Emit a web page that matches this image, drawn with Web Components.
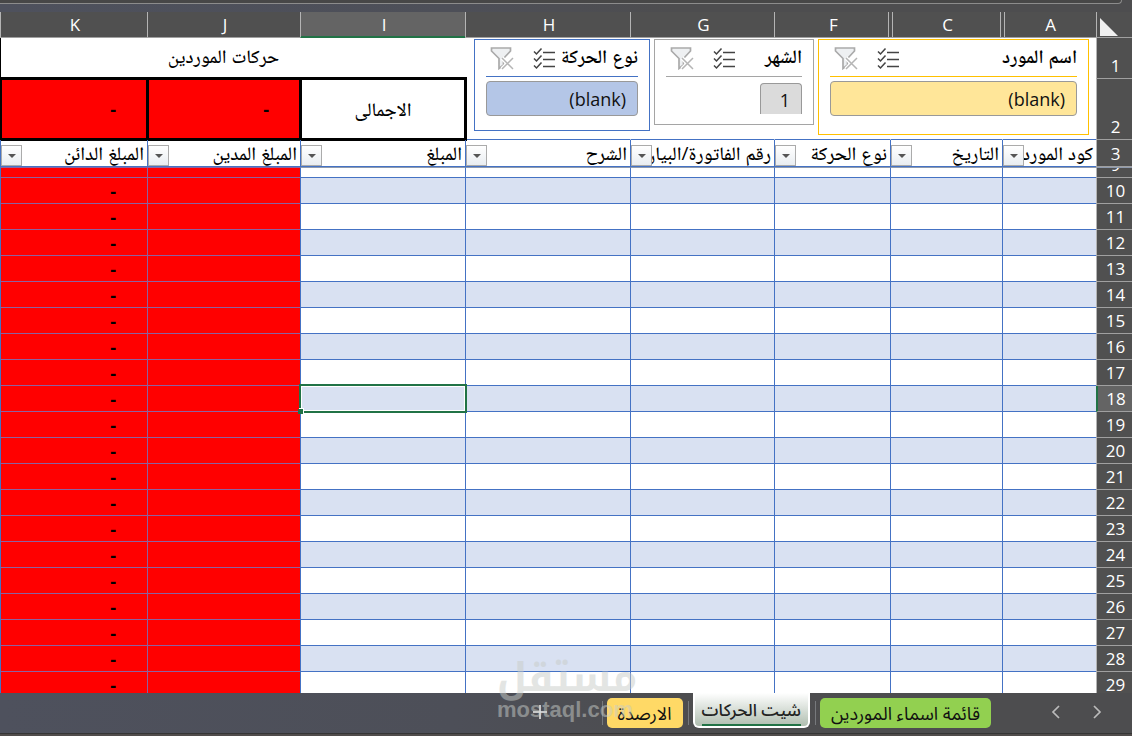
<!DOCTYPE html>
<html lang="ar" dir="rtl">
<head>
<meta charset="utf-8">
<title>حركات الموردين</title>
<style>
    body {
        margin: 0;
        height: 100vh;
        overflow: hidden;
        font-family: "Open Sans", "Noto Naskh Arabic", "DejaVu Sans", sans-serif;
    }
</style>
</head>
<body>
<sheet-app>
    <sheet-grid></sheet-grid>
    <slicer-card slot="slicers" theme="yellow" item="(blank)">اسم المورد</slicer-card>
    <slicer-card slot="slicers" theme="grey" item="1">الشهر</slicer-card>
    <slicer-card slot="slicers" theme="blue" item="(blank)">نوع الحركة</slicer-card>
    <sheet-tabs slot="tabs">
        <sheet-tab color="green">قائمة اسماء الموردين</sheet-tab>
        <sheet-tab color="active">شيت الحركات</sheet-tab>
        <sheet-tab color="yellow">الارصدة</sheet-tab>
    </sheet-tabs>
    <water-mark slot="mark"></water-mark>
</sheet-app>

<script>
class SheetApp extends HTMLElement {
    constructor() {
        super();
        this.shadow = this.attachShadow({ mode: "open" });
    }

    connectedCallback() {
        this.shadow.innerHTML = `
        <style>
            :host {
                display: flex;
                flex-direction: column;
                height: 100vh;
                background: linear-gradient(90deg, #4e515d 0, #4d4f58 40%, #4d4d4f 60%, #4d4d4f 100%);
                position: relative;
            }
            .ribbon {
                flex: none;
                height: 3px;
                margin-right: 10px;
                margin-bottom: 8px;
                background: #474747;
                border-bottom: 1px solid #8c8c8c;
                border-right: 1px solid #8c8c8c;
                border-bottom-right-radius: 4px;
            }
            main {
                flex: 1;
                min-height: 0;
                overflow: hidden;
                position: relative;
                background: #fff;
            }
            .slicers {
                position: absolute;
                top: 27px;
                right: 43px;
                display: flex;
                align-items: flex-start;
                gap: 4px;
            }
            .mark {
                position: absolute;
                left: 497px;
                bottom: 14px;
                pointer-events: none;
            }
        </style>
        <div class="ribbon"></div>
        <main>
            <slot></slot>
            <div class="slicers"><slot name="slicers"></slot></div>
        </main>
        <slot name="tabs"></slot>
        <div class="mark"><slot name="mark"></slot></div>
        `;
    }
}

class SheetGrid extends HTMLElement {
    constructor() {
        super();
        this.shadow = this.attachShadow({ mode: "open" });

        this.columns = [
            { letter: "A", width: 94, text: "كود المورد", hidden: true },
            { letter: "C", width: 112, text: "التاريخ", hidden: true },
            { letter: "F", width: 116, text: "نوع الحركة" },
            { letter: "G", width: 144, text: "رقم الفاتورة/البيان" },
            { letter: "H", width: 165, text: "الشرح" },
            { letter: "I", width: 165, text: "المبلغ" },
            { letter: "J", width: 153, text: "المبلغ المدين" },
            { letter: "K", width: 147, text: "المبلغ الدائن" }
        ];
        this.active = { letter: "I", row: 18 };
    }

    cell(row, letter) {
        const red = letter === "J" || letter === "K";
        const active = letter === this.active.letter && row === this.active.row;
        const classes = [red ? "red" : "", active ? "active" : ""].join(" ").trim();
        return `<td class="${classes}">${letter === "K" && row > 9 ? "-" : ""}</td>`;
    }

    rows() {
        const list = [];
        for (let row = 10; row <= 29; row++) {
            list.push(`
            <tr class="${row % 2 ? "" : "band"}">
                <th scope="row" class="${row === this.active.row ? "current" : ""}">${row}</th>
                ${this.columns.map(col => this.cell(row, col.letter)).join("")}
            </tr>`);
        }
        return list.join("");
    }

    connectedCallback() {
        const cols = this.columns;
        this.shadow.innerHTML = `
        <style>
            :host { display: block; --line: #4472c4; }
            table {
                width: 100%;
                table-layout: fixed;
                border-collapse: separate;
                border-spacing: 0;
                font-size: 18px;
                color: #000;
            }
            th, td {
                box-sizing: border-box;
                padding: 0;
                font-weight: 400;
                position: relative;
                line-height: 20px;
                white-space: nowrap;
            }
            .letters th, th[scope=row], .corner {
                background: #505050;
                color: #fff;
                font-size: 17px;
                text-align: center;
                border-left: 1px solid #b4b4b4;
                border-bottom: 1px solid #a0a0a0;
            }
            .letters th { height: 26px; padding-left: 2px; }
            .letters .current {
                background: #646464;
                border-bottom-color: #217346;
                box-shadow: inset 0 -1px #217346;
            }
            .letters .gap::before {
                content: "";
                position: absolute;
                z-index: 1;
                box-sizing: border-box;
                left: -3px;
                top: 0;
                bottom: 0;
                width: 5px;
                background: #505050;
                border: solid #b4b4b4;
                border-width: 0 1px;
            }
            .corner svg { display: block; margin: 4px 14px 0 0; }
            th[scope=row] { vertical-align: bottom; line-height: 24px; padding-left: 2px; }
            th[scope=row].current { background: #646464; border-left: 2px solid #217346; }
            .title { height: 41px; }
            .title td { text-align: center; font-size: 19px; line-height: 36px; vertical-align: top; }
            .title td:last-child { border-left: 1px solid #000; }
            .total { height: 61px; }
            .total td { border-left: 1px solid transparent; border-bottom: 1px solid var(--line); }
            .total .box { text-align: center; font-size: 19px; }
            .title td, .total .box, .fields td { font-weight: 500; }
            .total .box::after {
                content: "";
                position: absolute;
                inset: -2px;
                border: 3px solid #000;
            }
            .total .box.red { font-size: 18px; text-align: right; }
            .fields { height: 27px; }
            .fields td {
                text-align: right;
                font-size: 19px;
                border-left: 1px solid var(--line);
                border-bottom: 1px solid var(--line);
            }
            .fields div {
                height: 26px;
                line-height: 26px;
                padding-right: 3px;
                overflow: hidden;
            }
            .fields button {
                position: absolute;
                left: 0;
                bottom: 0;
                box-sizing: border-box;
                width: 21px;
                height: 21px;
                padding: 0;
                display: grid;
                place-items: center;
                border: 1px solid #ababab;
                background: linear-gradient(#fff, #e9edf1);
            }
            .sliver th[scope=row], .sliver td { border-top: 1px solid #8e9aae; }
            .sliver div { height: 9px; display: flex; align-items: flex-end; justify-content: center; overflow: hidden; }
            .data tr { height: 26px; }
            .data tr.sliver { height: 11px; }
            .data td {
                border-left: 1px solid var(--line);
                border-bottom: 1px solid var(--line);
                text-align: right;
            }
            .data .band td { background: #d9e1f2; }
            td.red.red, .data .band td.red {
                background: #f00;
                font-weight: 700;
                padding-right: 31px;
            }
            .data td.red { border-color: #8c62a0; }
            .data td.red:last-child { border-left-color: var(--line); }
            .active { z-index: 1; }
            .active::before {
                content: "";
                position: absolute;
                inset: -2px;
                border: 2px solid #217346;
                box-shadow: inset 0 0 0 1px #fff;
            }
            .active::after {
                content: "";
                position: absolute;
                left: -3px;
                bottom: -3px;
                width: 5px;
                height: 5px;
                background: #217346;
                box-shadow: 1px -1px 0 #fff;
            }
        </style>
        <table>
            <colgroup>
                <col style="width: 36px">
                ${cols.map(col => `<col style="width: ${col.width}px">`).join("")}
            </colgroup>
            <thead>
                <tr class="letters">
                    <td class="corner"><svg width="18" height="18"><path d="M0 0V18H18Z" fill="#f0f0f0"/></svg></td>
                    ${cols.map(col => `<th scope="col" class="${col.hidden ? "gap" : ""} ${col.letter === "I" ? "current" : ""}">${col.letter}</th>`).join("")}
                </tr>
                <tr class="title">
                    <th scope="row">1</th>
                    ${cols.map(col => `<td>${col.letter === "J" ? "حركات الموردين" : ""}</td>`).join("")}
                </tr>
                <tr class="total">
                    <th scope="row">2</th>
                    <td></td><td></td><td></td><td></td><td></td>
                    <td class="box">الاجمالى</td>
                    <td class="box red">-</td>
                    <td class="box red">-</td>
                </tr>
                <tr class="fields">
                    <th scope="row">3</th>
                    ${cols.map(col => `<td><div>${col.text}</div><button aria-label="تصفية ${col.text}"><svg width="8" height="4"><path d="M0 0H8L4 4Z" fill="#555"/></svg></button></td>`).join("")}
                </tr>
            </thead>
            <tbody class="data">
                <tr class="sliver">
                    <th scope="row"><div>9</div></th>
                    ${cols.map(col => this.cell(9, col.letter)).join("")}
                </tr>
                ${this.rows()}
            </tbody>
        </table>
        `;
    }
}

class SlicerCard extends HTMLElement {
    constructor() {
        super();
        this.shadow = this.attachShadow({ mode: "open" });
    }

    connectedCallback() {
        this.shadow.innerHTML = `
        <style>
            :host {
                display: block;
                box-sizing: border-box;
                background: #fff;
                border: 1px solid var(--edge);
                padding: 0 11px;
            }
            :host([theme=yellow]) { --edge: #ffc000; --fill: #ffe699; width: 271px; height: 96px; }
            :host([theme=grey]) { --edge: #a5a5a5; --fill: #dbdbdb; width: 160px; height: 86px; }
            :host([theme=blue]) { --edge: #4472c4; --fill: #b4c6e7; width: 176px; height: 92px; }
            header {
                display: flex;
                align-items: center;
                height: 36px;
                padding-left: 4px;
                border-bottom: 1px solid var(--edge);
                white-space: nowrap;
            }
            h2 { flex: 1; margin: 0; font-size: 19px; line-height: 32px; height: 36px; font-weight: 600; }
            .tool {
                flex: none;
                border: 0;
                background: none;
                padding: 0;
                width: 24px;
                height: 24px;
            }
            .tool + .tool { margin-right: 18px; }
            .tool svg { display: block; }
            .item {
                display: block;
                box-sizing: border-box;
                width: 100%;
                height: 35px;
                margin-top: 4px;
                padding: 0 11px;
                border: 1px solid #999;
                border-radius: 4px;
                background: var(--fill);
                font: 18px "Open Sans", "Noto Sans", sans-serif;
                line-height: 32px;
                color: #111;
                text-align: right;
                direction: ltr;
            }
            :host([theme=grey]) .item {
                width: 42px;
                height: 31px;
                margin-top: 6px;
                border-bottom: 0;
                border-radius: 4px 4px 0 0;
            }
        </style>
        <header>
            <h2><slot></slot></h2>
            <button class="tool" aria-label="تحديد متعدد">
                <svg width="24" height="24" fill="none" stroke="#444" stroke-width="2">
                    <path stroke-width="1.700" d="M11 6.500H23M11 13.500H23M11 20.500H23"/>
                    <path stroke-width="1.500" d="M2 5.500L4.500 8L9.500 2.500M2 12.500L4.500 15L9.500 9.500M2 19.500L4.500 22L9.500 16.500"/>
                </svg>
            </button>
            <button class="tool" aria-label="مسح عامل التصفية">
                <svg width="24" height="24" fill="none">
                    <path d="M1.500 2H20.500V5L13.500 12.500V19L9 22.500V12.500L1.500 5Z" fill="#eef0f2" stroke="#aaa" stroke-width="1.700"/>
                    <path d="M12 12L23 23M23 12L12 23" stroke="#fff" stroke-width="4"/>
                    <path d="M12 12L23 23M23 12L12 23" stroke="#b5b5b5" stroke-width="1.500"/>
                </svg>
            </button>
        </header>
        <button class="item">${this.getAttribute("item")}</button>
        `;
    }
}

class SheetTabs extends HTMLElement {
    constructor() {
        super();
        this.shadow = this.attachShadow({ mode: "open" });
    }

    connectedCallback() {
        this.shadow.innerHTML = `
        <style>
            :host {
                flex: none;
                display: block;
                border-bottom: 2px solid #504c4b;
            }
            nav {
                display: flex;
                align-items: flex-start;
                height: 40px;
                padding-right: 28px;
                border-bottom: 1px solid #353535;
            }
            .arrow, .add {
                border: 0;
                background: none;
                padding: 0;
                width: 14px;
                height: 14px;
                margin-top: 12px;
            }
            .arrow + .arrow { margin: 12px 27px 0 58px; }
            .add { width: 16px; margin-right: 49px; }
            svg { display: block; }
        </style>
        <nav>
            <button class="arrow" aria-label="السابق"><svg width="14" height="14" fill="none" stroke="#bbb" stroke-width="1.700"><path d="M4 1L10 7L4 13"/></svg></button>
            <button class="arrow" aria-label="التالي"><svg width="14" height="14" fill="none" stroke="#bbb" stroke-width="1.700"><path d="M10 1L4 7L10 13"/></svg></button>
            <slot></slot>
            <button class="add" aria-label="ورقة جديدة"><svg width="16" height="14" stroke="#eee" stroke-width="1.500"><path d="M1 7H15M8 0V14"/></svg></button>
        </nav>
        `;
    }
}

class SheetTab extends HTMLElement {
    constructor() {
        super();
        this.shadow = this.attachShadow({ mode: "open" });
    }

    connectedCallback() {
        this.shadow.innerHTML = `
        <style>
            :host { display: flex; }
            :host::after {
                content: "";
                width: 1px;
                height: 24px;
                margin: 8px 4px 0 5px;
                background: #77797c;
            }
            button {
                height: 30px;
                margin: 5px 0 0;
                padding: 0 11px;
                border: 0;
                border-radius: 5px;
                font: 18px "Noto Sans Arabic", "DejaVu Sans", sans-serif;
                line-height: 32px;
                color: #111;
                white-space: nowrap;
            }
            :host([color=green]) button { background: #92d050; }
            :host([color=yellow]) button { background: #ffd966; }
            :host([color=active]) button {
                height: 35px;
                margin-top: 0;
                padding: 0 7px;
                border: solid #fff;
                border-width: 0 2px 2px;
                border-radius: 0 0 6px 6px;
                background: linear-gradient(#fff, #b0beb0);
                font-size: 17px;
                font-weight: 500;
                color: #222;
            }
            :host([color=active]) span {
                display: block;
                height: 30px;
                line-height: 34px;
                border-bottom: 2px solid #217346;
            }
        </style>
        <button><span><slot></slot></span></button>
        `;
    }
}

class WaterMark extends HTMLElement {
    constructor() {
        super();
        this.shadow = this.attachShadow({ mode: "open" });
    }

    connectedCallback() {
        this.shadow.innerHTML = `
        <style>
            :host {
                display: block;
                color: #c8ccc8;
                opacity: .5;
                text-align: left;
                white-space: nowrap;
            }
            .ar { font: 700 39px/40px "Noto Kufi Arabic", "DejaVu Sans", sans-serif; }
            .en { font: 700 22px/24px "Liberation Sans", sans-serif; direction: ltr; }
        </style>
        <div class="ar">مستقل</div>
        <div class="en">mostaql.com</div>
        `;
    }
}

window.customElements.define("sheet-app", SheetApp);
window.customElements.define("sheet-grid", SheetGrid);
window.customElements.define("slicer-card", SlicerCard);
window.customElements.define("sheet-tabs", SheetTabs);
window.customElements.define("sheet-tab", SheetTab);
window.customElements.define("water-mark", WaterMark);
</script>
</body>
</html>
